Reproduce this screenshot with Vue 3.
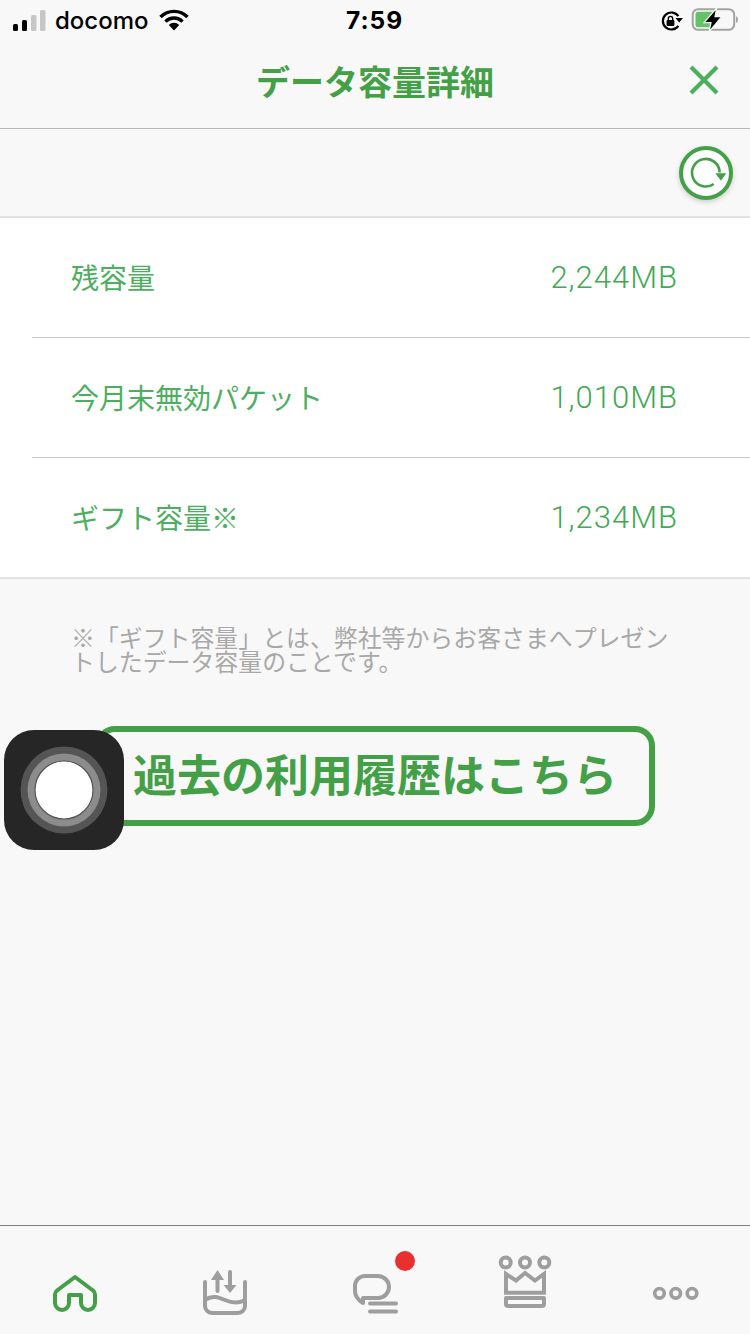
<script setup>
const rows = [
  { label: '残容量', value: '2,244MB' },
  { label: '今月末無効パケット', value: '1,010MB' },
  { label: 'ギフト容量※', value: '1,234MB' },
]
</script>

<template>
  <div class="page">
    <div class="status">
      <div class="status-left">
        <svg class="signal" width="34" height="24" viewBox="0 0 34 24">
          <rect x="0" y="15" width="5" height="7" rx="1.5" fill="#000" />
          <rect x="9" y="11" width="5" height="11" rx="1.5" fill="#000" />
          <rect x="18" y="6" width="5.5" height="16" rx="1.5" fill="#c6c6c6" />
          <rect x="27" y="1" width="5.5" height="21" rx="1.5" fill="#c6c6c6" />
        </svg>
        <span class="carrier">docomo</span>
        <svg class="wifi" width="30" height="22" viewBox="0 0 30 22">
          <path d="M1.5 8 A19 19 0 0 1 28.5 8" fill="none" stroke="#000" stroke-width="3.4" />
          <path d="M6.5 12.6 A12 12 0 0 1 23.5 12.6" fill="none" stroke="#000" stroke-width="3.4" />
          <path d="M15 21.5 L9.8 16 A7.4 7.4 0 0 1 20.2 16 Z" fill="#000" />
        </svg>
      </div>
      <span class="time">7:59</span>
      <div class="status-right">
        <svg class="lock" width="24" height="22" viewBox="0 0 24 22">
          <path d="M18.4 6.2 A8.5 8.5 0 1 0 18.4 15.8" fill="none" stroke="#000" stroke-width="2.2" />
          <path d="M15.5 8 L23 8 L19.2 12.4 Z" fill="#000" />
          <rect x="6.6" y="10" width="7.8" height="6" rx="1" fill="#000" />
          <path d="M8.3 10 V8.6 A2.2 2.2 0 0 1 12.7 8.6 V10" fill="none" stroke="#000" stroke-width="1.4" />
        </svg>
        <svg width="50" height="26" viewBox="0 0 50 26">
          <rect x="2.700" y="2.200" width="41.500" height="20.600" rx="5.500" fill="none" stroke="#a3a3a3" stroke-width="2" />
          <rect x="5.500" y="4.800" width="19" height="15.400" rx="2.500" fill="#62c466" />
          <path d="M46 9 Q48 10 48 12.500 Q48 15 46 16 Z" fill="#a3a3a3" />
          <path d="M26.700 1 L14 15.700 H21 L19 25 L31.700 9.700 H25 Z" fill="#000" stroke="#f8f8f8" stroke-width="1.200" />
        </svg>
      </div>
    </div>

    <header class="header">
      <h1 class="title">データ容量詳細</h1>
      <svg class="close" width="34" height="34" viewBox="0 0 34 34">
        <path d="M4 4 L30 30 M30 4 L4 30" stroke="#4caf5f" stroke-width="4.2" fill="none" />
      </svg>
    </header>

    <div class="refresh-row">
      <div class="refresh">
        <svg width="44" height="44" viewBox="0 0 44 44">
          <path d="M35.600 21.500 A13.800 13.800 0 1 0 29.700 33" fill="none" stroke="#43a047" stroke-width="2.600" />
          <path d="M31.300 22.300 H42.300 L37 29.700 Z" fill="#43a047" />
        </svg>
      </div>
    </div>

    <section class="list">
      <div v-for="row in rows" :key="row.label" class="row">
        <span class="label">{{ row.label }}</span>
        <span class="value">{{ row.value }}</span>
      </div>
    </section>

    <p class="note">※「ギフト容量」とは、弊社等からお客さまへプレゼントしたデータ容量のことです。</p>

    <div class="history">過去の利用履歴はこちら</div>

    <nav class="tabs">
      <div class="tab">
        <svg width="150" height="108" viewBox="0 0 150 108">
          <path class="active" d="M75 51 L93 64.500 Q95 66 95 68.500 V77 A7 7 0 0 1 81 77 V69 H69 V77 A7 7 0 0 1 55 77 V68.500 Q55 66 57 64.500 Z" />
        </svg>
      </div>
      <div class="tab">
        <svg width="150" height="108" viewBox="0 0 150 108">
          <path class="line" d="M55 56 V80 A7 7 0 0 0 62 87 H88 A7 7 0 0 0 95 80 V56" />
          <path class="line" d="M55 74 C62 69 68 71 75 74 S88 78 95 74" />
          <path class="line" d="M67.500 65 V50 M80 46 V60" />
          <path class="solid" d="M61 54 L67.500 44 L74 54 Z M73.500 59 H86.500 L80 67 Z" />
        </svg>
      </div>
      <div class="tab">
        <svg width="150" height="108" viewBox="0 0 150 108">
          <path class="line" d="M65 50 H78 A11 11 0 0 1 78 72 H63 V77 Q55 72 55 65 V60 A10 10 0 0 1 65 50 Z" />
          <path class="line" d="M70 77.500 H96 M70 85.500 H96" />
        </svg>
        <span class="badge"></span>
      </div>
      <div class="tab">
        <svg width="150" height="108" viewBox="0 0 150 108">
          <circle class="line" cx="55.700" cy="36.500" r="5" />
          <circle class="line" cx="75" cy="36.500" r="5" />
          <circle class="line" cx="94.300" cy="36.500" r="5" />
          <path class="line sharp" d="M56 48 L66 54.500 L75 47 L85 54.500 L94 48 V66.700 H56 Z" />
          <path class="line" d="M56 72 H94 V78 Q94 80 92 80 H58 Q56 80 56 78 Z" stroke-width="3.500" />
        </svg>
      </div>
      <div class="tab">
        <svg width="150" height="108" viewBox="0 0 150 108">
          <circle class="dots" cx="59.500" cy="67.300" r="4.800" />
          <circle class="dots" cx="75.700" cy="67.300" r="4.800" />
          <circle class="dots" cx="92" cy="67.300" r="4.800" />
        </svg>
      </div>
    </nav>

    <div class="assistive">
      <svg width="120" height="120" viewBox="0 0 120 120">
        <circle cx="60" cy="60" r="43.500" fill="#555" />
        <circle cx="60" cy="60" r="36.500" fill="#8c8c8c" />
        <circle cx="60" cy="60" r="29" fill="#fff" stroke="#555" stroke-width="1.200" />
      </svg>
    </div>
  </div>
</template>

<style>
html, body { margin: 0; padding: 0; background: #f8f8f8; }
</style>

<style scoped>
.page {
  position: relative;
  width: 750px;
  height: 1334px;
  overflow: hidden;
  display: flex;
  flex-direction: column;
  background: #f8f8f8;
  font-family: "Noto Sans CJK JP", "Noto Sans", sans-serif;
}
.status {
  height: 40px;
  display: flex;
  align-items: center;
  justify-content: space-between;
  padding: 0 10px 0 13px;
  position: relative;
  font-family: Inter, "Liberation Sans", sans-serif;
  color: #000;
}
.status-left, .status-right { display: flex; align-items: center; }
.status-right { gap: 6px; }
.lock { margin-top: 2px; }
.signal { margin-right: 8px; margin-top: 1px; }
.carrier { font-size: 24px; font-weight: 500; }
.wifi { margin-left: 10px; margin-top: -1px; }
.time {
  position: absolute;
  left: 346px;
  font-size: 24.500px;
  font-weight: 700;
  letter-spacing: 1px;
}
.header {
  height: 88px;
  position: relative;
  display: flex;
  align-items: center;
  justify-content: center;
  border-bottom: 1px solid #b8b8b8;
}
.title {
  margin: -6px 0 0;
  font-size: 34px;
  font-weight: 700;
  color: #43a047;
  line-height: 1;
}
.close { position: absolute; right: 29px; top: 23px; }
.refresh-row {
  height: 87px;
  display: flex;
  align-items: center;
  justify-content: flex-end;
  padding-right: 17px;
  border-bottom: 2px solid #e2e2e2;
}
.refresh {
  width: 46px;
  height: 46px;
  border: 4.500px solid #43a047;
  border-radius: 50%;
  background: #fff;
  display: flex;
  align-items: center;
  justify-content: center;
  box-shadow: 0 2px 5px rgba(0, 0, 0, 0.18);
  margin-top: 1px;
}
.list {
  background: #fff;
  border-bottom: 2px solid #e2e2e2;
}
.row {
  height: 119px;
  margin-left: 32px;
  padding: 0 72px 0 39px;
  display: flex;
  align-items: center;
  justify-content: space-between;
  border-bottom: 1px solid #c8c8c8;
  color: #4caf5f;
}
.row:last-child { border-bottom: none; }
.label { font-size: 28px; font-weight: 400; padding-bottom: 2px; }
.value { font-family: Roboto, "Liberation Sans", sans-serif; font-weight: 300; font-size: 31px; letter-spacing: 1px; color: #3fa955; }
.note {
  margin: 46px 71px 0 71px;
  font-size: 23.900px;
  line-height: 24px;
  color: #a8a8a8;
}
.history {
  width: 560px;
  height: 100px;
  margin: 53px 0 0 95px;
  padding-bottom: 6px;
  box-sizing: border-box;
  border: 6px solid #43a047;
  border-radius: 20px;
  display: flex;
  align-items: center;
  justify-content: center;
  color: #43a047;
  font-size: 44px;
  font-weight: 700;
}
.tabs {
  margin-top: auto;
  height: 108px;
  display: flex;
  border-top: 1px solid #808080;
}
.tab { position: relative; width: 150px; height: 108px; }
.tab svg { display: block; }
.active { fill: none; stroke: #43a047; stroke-width: 4; stroke-linejoin: round; }
.line { fill: none; stroke: #9e9e9e; stroke-width: 4; stroke-linecap: round; stroke-linejoin: round; }
.dots { fill: none; stroke: #9e9e9e; stroke-width: 3.600; }
.sharp { stroke-linejoin: miter; stroke-linecap: butt; }
.solid { fill: #9e9e9e; }
.badge {
  position: absolute;
  left: 95px;
  top: 25px;
  width: 20px;
  height: 20px;
  border-radius: 50%;
  background: #e83030;
}
.assistive {
  position: absolute;
  left: 4px;
  top: 730px;
  width: 120px;
  height: 120px;
  border-radius: 30px;
  background: #262626;
}
</style>
